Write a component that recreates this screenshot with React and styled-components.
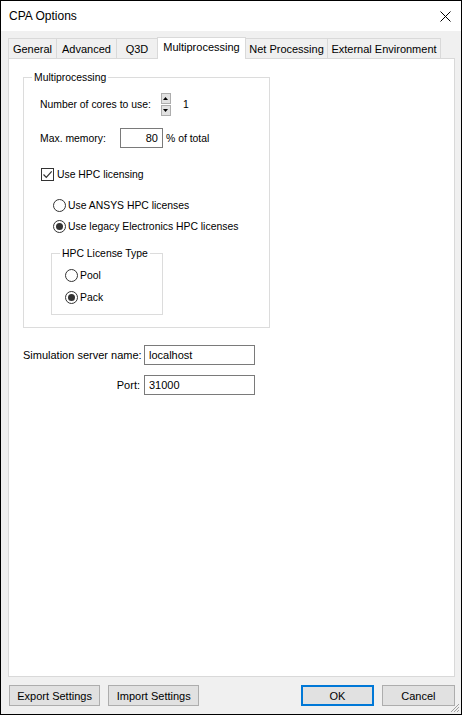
import React from 'react';
import styled, { createGlobalStyle } from 'styled-components';

const GlobalStyle = createGlobalStyle`
    html, body {
        margin: 0;
        padding: 0;
        background: #ffffff;
    }
    * {
        box-sizing: border-box;
    }
`;

const StyledWindow = styled.div`
    position: relative;
    width: 462px;
    height: 715px;
    border: 1px solid #000000;
    display: flex;
    flex-direction: column;
    font-family: "Liberation Sans", Arial, sans-serif;
    font-size: 10.4px;
    color: #000000;
    background: #f0f0f0;
    white-space: nowrap;
`;

const StyledTitleBar = styled.div`
    height: 30px;
    background: #ffffff;
    display: flex;
    align-items: center;
    justify-content: space-between;
    padding: 0 10px 0 8px;
    font-size: 12px;
`;

const StyledBody = styled.div`
    flex: 1;
    display: flex;
    flex-direction: column;
    padding: 6px 6px 8px 7px;
`;

const StyledTabStrip = styled.div`
    display: flex;
    align-items: flex-end;
    height: 21px;
    padding-left: 1px;
`;

const StyledTab = styled.div`
    width: ${(p) => p.width}px;
    height: ${(p) => (p.active ? 22 : 20)}px;
    border: 1px solid #d9d9d9;
    border-bottom: none;
    margin-left: -1px;
    background: ${(p) => (p.active ? '#ffffff' : '#f0f0f0')};
    display: flex;
    align-items: center;
    justify-content: center;
    padding-bottom: ${(p) => (p.active ? 3 : 0)}px;
    position: relative;
    z-index: ${(p) => (p.active ? 2 : 1)};
    margin-bottom: ${(p) => (p.active ? -1 : 0)}px;
    font-size: 11px;
`;

const StyledPanel = styled.div`
    flex: 1;
    background: #ffffff;
    border: 1px solid #d9d9d9;
    padding: 12px 13px 0 14px;
`;

const StyledGroup = styled.fieldset`
    width: ${(p) => p.width}px;
    margin: ${(p) => p.top || 0}px 0 0 ${(p) => p.indent || 0}px;
    border: 1px solid #dcdcdc;
    padding: 0;
    min-width: 0;
`;

const StyledLegend = styled.legend`
    margin-left: 8px;
    padding: 0 2px;
    line-height: 13px;
    white-space: nowrap;
`;

const StyledGroupBody = styled.div`
    padding: ${(p) => p.pad};
`;

const StyledRow = styled.div`
    display: flex;
    align-items: center;
    margin-top: ${(p) => p.top || 0}px;
    margin-left: ${(p) => p.indent || 0}px;
    height: ${(p) => p.h || 13}px;
`;

const StyledLabel = styled.span`
    width: ${(p) => (p.width ? `${p.width}px` : 'auto')};
    margin-left: ${(p) => p.gap || 0}px;
`;

const StyledSpin = styled.div`
    display: flex;
    flex-direction: column;
    gap: 1px;
    margin-left: 10px;
    margin-right: 12px;
`;

const StyledSpinButton = styled.div`
    width: 10px;
    height: 11px;
    background: #e1e1e1;
    border: 1px solid #adadad;
    display: flex;
    align-items: center;
    justify-content: center;
`;

const StyledInput = styled.div`
    width: ${(p) => p.width}px;
    height: 20px;
    border: 1px solid #7a7a7a;
    background: #ffffff;
    display: flex;
    align-items: center;
    justify-content: ${(p) => (p.right ? 'flex-end' : 'flex-start')};
    padding: 0 4px;
    font-size: 11px;
`;

const StyledCheck = styled.div`
    width: 13px;
    height: 13px;
    border: 1px solid #333333;
    background: #ffffff;
    display: flex;
    align-items: center;
    justify-content: center;
    margin-right: 3px;
`;

const StyledRadio = styled.div`
    width: 13px;
    height: 13px;
    border: 1px solid #333333;
    border-radius: 50%;
    background: #ffffff;
    display: flex;
    align-items: center;
    justify-content: center;
    margin-right: 2px;

    &::after {
        content: '';
        display: ${(p) => (p.checked ? 'block' : 'none')};
        width: 7px;
        height: 7px;
        border-radius: 50%;
        background: #333333;
    }
`;

const StyledServerGrid = styled.div`
    display: grid;
    grid-template-columns: 117px 111px;
    column-gap: 4px;
    row-gap: 10px;
    align-items: center;
    margin-top: 17px;
    font-size: 11px;
`;

const StyledFieldLabel = styled.div`
    text-align: right;
`;

const StyledFooter = styled.div`
    display: flex;
    align-items: center;
    gap: 8px;
    margin-top: 8px;
    padding-left: 1px;
    font-size: 11px;
`;

const StyledButton = styled.div`
    width: ${(p) => p.width}px;
    height: 21px;
    background: #e1e1e1;
    border: ${(p) => (p.primary ? '2px solid #0078d7' : '1px solid #adadad')};
    display: flex;
    align-items: center;
    justify-content: center;
    margin-left: ${(p) => p.push || 0}px;
`;

const StyledGrip = styled.svg`
    position: absolute;
    right: 1px;
    bottom: 1px;
`;

const Close = () => (
    <svg width="11" height="11" viewBox="0 0 11 11">
        <path d="M0.5 0.5 L10.5 10.5 M10.5 0.5 L0.5 10.5" stroke="#000" strokeWidth="1" />
    </svg>
);

const Arrow = ({ down }) => (
    <svg width="5" height="3" viewBox="0 0 5 3">
        <path d={down ? 'M0 0 H5 L2.5 3 Z' : 'M0 3 H5 L2.5 0 Z'} fill="#000" />
    </svg>
);

const Tick = () => (
    <svg width="11" height="11" viewBox="0 0 11 11">
        <path d="M1.5 5.5 L4.3 8.3 L9.7 2.3" stroke="#333" strokeWidth="1.2" fill="none" />
    </svg>
);

const tabs = [
    ['General', 49],
    ['Advanced', 61],
    ['Q3D', 42],
    ['Multiprocessing', 89],
    ['Net Processing', 83],
    ['External Environment', 114],
];

const App = () => {
    return (
        <>
            <GlobalStyle />
            <StyledWindow>
                <StyledTitleBar>
                    <span>CPA Options</span>
                    <Close />
                </StyledTitleBar>
                <StyledBody>
                    <StyledTabStrip>
                        {tabs.map(([name, w]) => (
                            <StyledTab key={name} width={w} active={name === 'Multiprocessing'}>
                                {name}
                            </StyledTab>
                        ))}
                    </StyledTabStrip>
                    <StyledPanel>
                        <StyledGroup width={247}>
                            <StyledLegend>Multiprocessing</StyledLegend>
                            <StyledGroupBody pad="0 0 12px 16px">
                                <StyledRow top={8} h={24}>
                                    <StyledLabel>Number of cores to use:</StyledLabel>
                                    <StyledSpin>
                                        <StyledSpinButton>
                                            <Arrow />
                                        </StyledSpinButton>
                                        <StyledSpinButton>
                                            <Arrow down />
                                        </StyledSpinButton>
                                    </StyledSpin>
                                    <StyledLabel>1</StyledLabel>
                                </StyledRow>
                                <StyledRow top={12} h={20}>
                                    <StyledLabel width={80}>Max. memory:</StyledLabel>
                                    <StyledInput width={43} right>
                                        80
                                    </StyledInput>
                                    <StyledLabel gap={3}>% of total</StyledLabel>
                                </StyledRow>
                                <StyledRow top={20} indent={1}>
                                    <StyledCheck>
                                        <Tick />
                                    </StyledCheck>
                                    <StyledLabel>Use HPC licensing</StyledLabel>
                                </StyledRow>
                                <StyledRow top={18} indent={13}>
                                    <StyledRadio />
                                    <StyledLabel>Use ANSYS HPC licenses</StyledLabel>
                                </StyledRow>
                                <StyledRow top={8} indent={13}>
                                    <StyledRadio checked />
                                    <StyledLabel>Use legacy Electronics HPC licenses</StyledLabel>
                                </StyledRow>
                                <StyledGroup width={112} indent={11} top={14}>
                                    <StyledLegend>HPC License Type</StyledLegend>
                                    <StyledGroupBody pad="0 0 10px 13px">
                                        <StyledRow top={9}>
                                            <StyledRadio />
                                            <StyledLabel>Pool</StyledLabel>
                                        </StyledRow>
                                        <StyledRow top={9}>
                                            <StyledRadio checked />
                                            <StyledLabel>Pack</StyledLabel>
                                        </StyledRow>
                                    </StyledGroupBody>
                                </StyledGroup>
                            </StyledGroupBody>
                        </StyledGroup>
                        <StyledServerGrid>
                            <StyledFieldLabel>Simulation server name:</StyledFieldLabel>
                            <StyledInput width={111}>localhost</StyledInput>
                            <StyledFieldLabel>Port:</StyledFieldLabel>
                            <StyledInput width={111}>31000</StyledInput>
                        </StyledServerGrid>
                    </StyledPanel>
                    <StyledFooter>
                        <StyledButton width={92}>Export Settings</StyledButton>
                        <StyledButton width={92}>Import Settings</StyledButton>
                        <StyledButton width={73} primary push={94}>
                            OK
                        </StyledButton>
                        <StyledButton width={74}>Cancel</StyledButton>
                    </StyledFooter>
                </StyledBody>
                <StyledGrip width="10" height="10" viewBox="0 0 10 10">
                    <path d="M9 1 L1 9 M9 4 L4 9 M9 7 L7 9" stroke="#a0a0a0" strokeWidth="1" />
                </StyledGrip>
            </StyledWindow>
        </>
    );
};

export default App;
